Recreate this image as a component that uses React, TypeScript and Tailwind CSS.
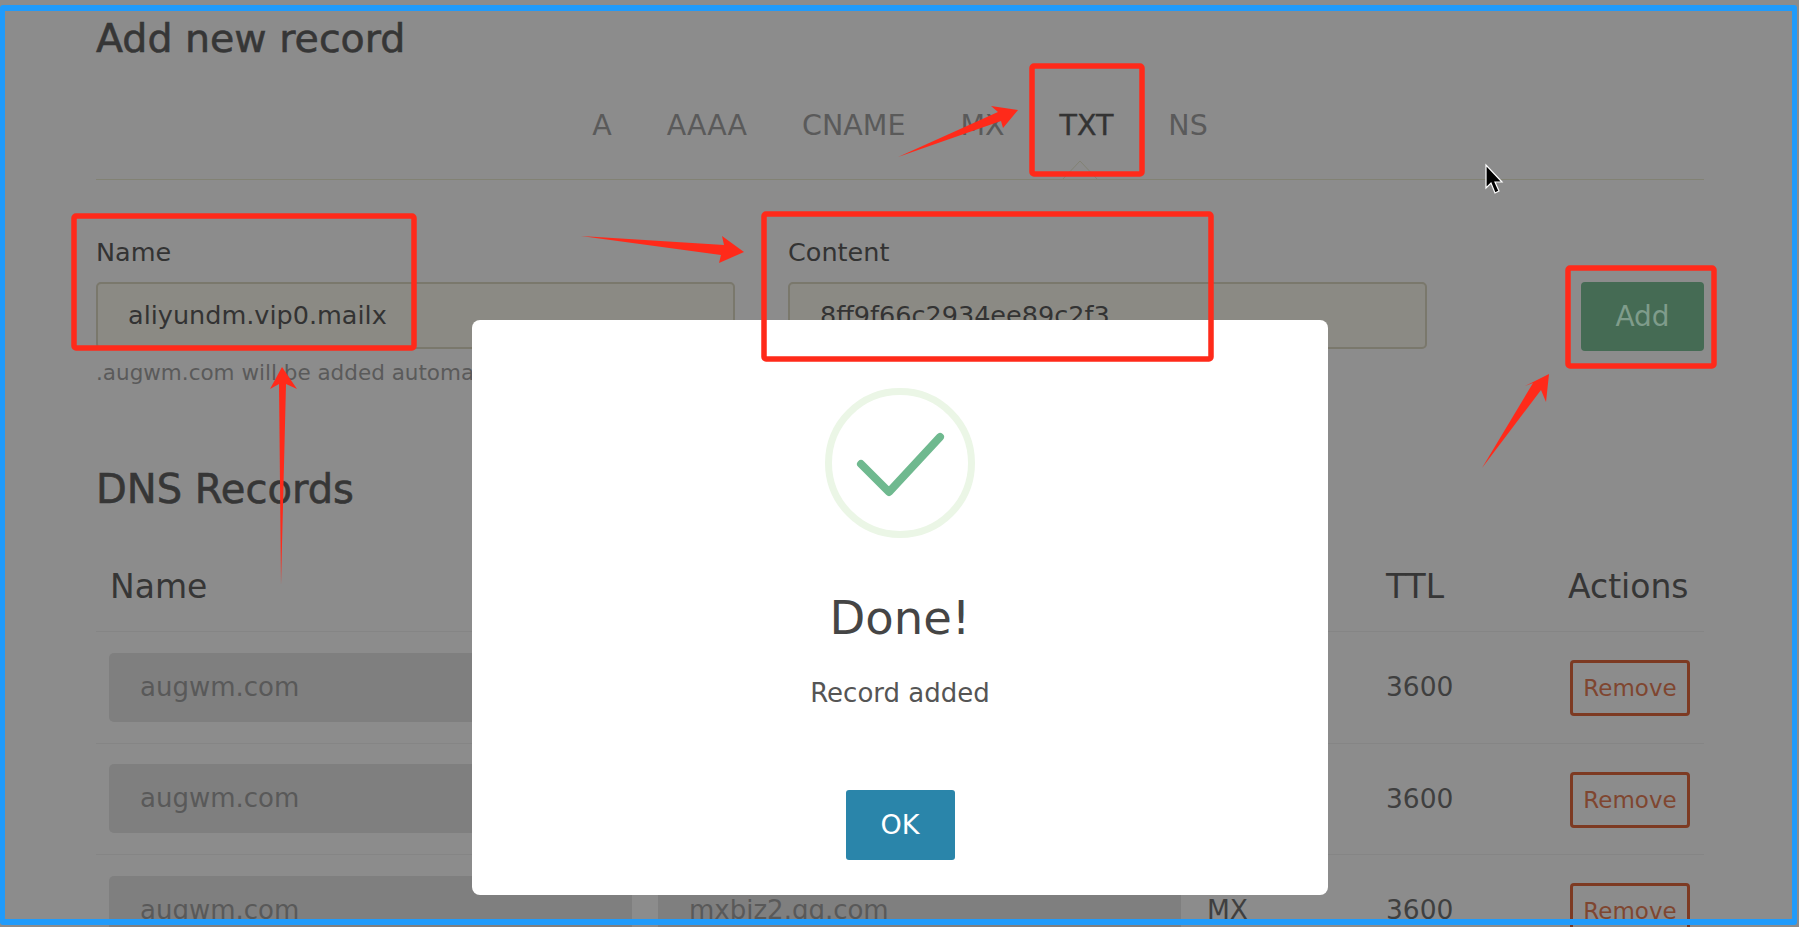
import React from "react";

const font = "font-['DejaVu_Sans',sans-serif]";

const tabs = ["A", "AAAA", "CNAME", "MX", "TXT", "NS"];

const rows = [
  { name: "augwm.com", content: "mxbiz1.qq.com" },
  { name: "augwm.com", content: "mxbiz1.qq.com" },
  { name: "augwm.com", content: "mxbiz2.qq.com" },
];

const gridCols = "grid grid-cols-[549px_549px_180px_181px_149px] items-center";

const Field = ({ label, value }: { label: string; value: string }) => (
  <div>
    <div className="h-[34px] text-[25.5px] leading-[34px] text-[#333333]">{label}</div>
    <div className="mt-[13px] flex h-[67px] items-center rounded-[5px] border-2 border-[#7a786c] bg-[#8b8a84] pl-[30px] text-[25.5px] text-[#333333]">
      {value}
    </div>
  </div>
);

const RecordRow = ({ name, content }: { name: string; content: string }) => (
  <div className={`${gridCols} h-[111.5px] border-b border-[#858585]`}>
    <div className="mx-[13px] flex h-[69px] items-center rounded-[5px] bg-[#7f7f7f] pl-[31px] text-[26px] text-[#595959]">
      {name}
    </div>
    <div className="mx-[13px] flex h-[69px] items-center rounded-[5px] bg-[#7f7f7f] pl-[31px] text-[26px] text-[#595959]">
      {content}
    </div>
    <div className="pl-[13px] text-[26.5px] text-[#3f3f3f]">MX</div>
    <div className="pl-[12px] text-[26.5px] text-[#3f3f3f]">3600</div>
    <div className="pl-[15px] pt-[2px]">
      <button className="flex h-[56px] w-[120px] items-center justify-center rounded-[4px] border-[3px] border-[#7d3a22] text-[23px] text-[#7f4630]">
        Remove
      </button>
    </div>
  </div>
);

const Annotations = () => (
  <svg className="absolute left-0 top-0" width="1799" height="927" viewBox="0 0 1799 927">
    <g fill="none" stroke="#ff2a1a" strokeWidth="5.5" strokeLinejoin="round">
      <rect x="74" y="216" width="340" height="132" rx="2" />
      <rect x="764" y="214" width="447" height="145" rx="2" />
      <rect x="1032" y="66" width="110" height="108" rx="2" />
      <rect x="1568" y="268" width="146" height="98" rx="2" />
    </g>
    <g fill="#ff2a1a">
      <polygon points="581,236 724,245 722,236 744,252 719,263 721,255" />
      <polygon points="898,157 998,112 991,106 1018,110 1003,128 1001,121" />
      <polygon points="282,367 297,389 286,384 281,585 279,384 270,389" />
      <polygon points="1549,374 1546,402 1541,390 1482,468 1533,383 1525,386" />
    </g>
    <path d="M1486 165 L1486 188 L1491 183 L1495 193 L1499 191 L1495 182 L1502 182 Z" fill="#000000" stroke="#ffffff" strokeWidth="1.2" />
  </svg>
);

const Dialog = () => (
  <div className="absolute left-[472px] top-[320px] flex h-[575px] w-[856px] flex-col items-center rounded-[8px] bg-white">
    <svg className="mt-[68px]" width="150" height="150" viewBox="0 0 150 150">
      <circle cx="75" cy="75" r="71.5" fill="none" stroke="#ebf6e6" strokeWidth="7" />
      <path d="M36 76 L64 104 L115 49" fill="none" stroke="#6fb98f" strokeWidth="8" strokeLinecap="round" strokeLinejoin="round" />
    </svg>
    <div className="mt-[50px] h-[60px] text-[46.5px] leading-[60px] text-[#454545]">Done!</div>
    <div className="mt-[27px] h-[36px] text-[26px] leading-[36px] text-[#555555]">Record added</div>
    <button className="mt-[79px] flex h-[70px] w-[109px] items-center justify-center rounded-[3px] bg-[#2a85aa] text-[27px] text-white">
      OK
    </button>
  </div>
);

export default function App() {
  return (
    <div className={`${font} relative h-[927px] w-[1799px] overflow-hidden bg-[#8c8c8c]`}>
      <div className="pl-[96px] pr-[95px] pt-[12px]">
        <h1 className="h-[52px] text-[39.5px] leading-[52px] text-[#363636] [-webkit-text-stroke:0.6px_#363636]">
          Add new record
        </h1>

        <div className="flex h-[116px] justify-center gap-[55px] border-b border-[#828274] pt-[44px]">
          {tabs.map((tab) => (
            <div
              key={tab}
              className={`relative h-[36px] text-[28.5px] leading-[36px] ${tab === "TXT" ? "text-[#333333] [-webkit-text-stroke:0.4px_#333333]" : "text-[#5a5a5a]"}`}
            >
              {tab}
              {tab === "TXT" && (
                <svg className="absolute left-[2px] top-[51px]" width="36" height="21" viewBox="0 0 36 21">
                  <path d="M1 20 L18 2 L35 20" fill="none" stroke="#828274" strokeWidth="1" />
                </svg>
              )}
            </div>
          ))}
        </div>

        <div className="mt-[55px] grid grid-cols-[639px_639px_1fr] gap-x-[53px]">
          <div>
            <Field label="Name" value="aliyundm.vip0.mailx" />
            <div className="mt-[9px] h-[30px] text-[21.5px] leading-[30px] text-[#5a5a5a]">
              .augwm.com will be added automatically
            </div>
          </div>
          <Field label="Content" value="8ff9f66c2934ee89c2f3" />
          <div className="flex justify-end pt-[47px]">
            <button className="flex h-[69px] w-[123px] items-center justify-center rounded-[4px] bg-[#456b54] text-[28px] text-[#7f9c8b]">
              Add
            </button>
          </div>
        </div>

        <h2 className="mt-[76px] h-[50px] text-[40px] leading-[50px] text-[#363636] [-webkit-text-stroke:0.6px_#363636]">
          DNS Records
        </h2>

        <div className={`${gridCols} mt-[45px] h-[73px] border-b border-[#858585] pb-[17px] text-[33px] text-[#363636]`}>
          <div className="pl-[14px]">Name</div>
          <div className="pl-[13px]">Content</div>
          <div className="pl-[13px]">Type</div>
          <div className="pl-[12px]">TTL</div>
          <div className="pl-[13px]">Actions</div>
        </div>

        {rows.map((row, i) => (
          <RecordRow key={i} name={row.name} content={row.content} />
        ))}
      </div>

      <Dialog />
      <Annotations />

      <div className="absolute bottom-[2px] left-0 right-[2px] top-[5px] rounded-[3px] border-x-[5px] border-b-[6px] border-t-[6px] border-[#209bfb]" />
    </div>
  );
}
